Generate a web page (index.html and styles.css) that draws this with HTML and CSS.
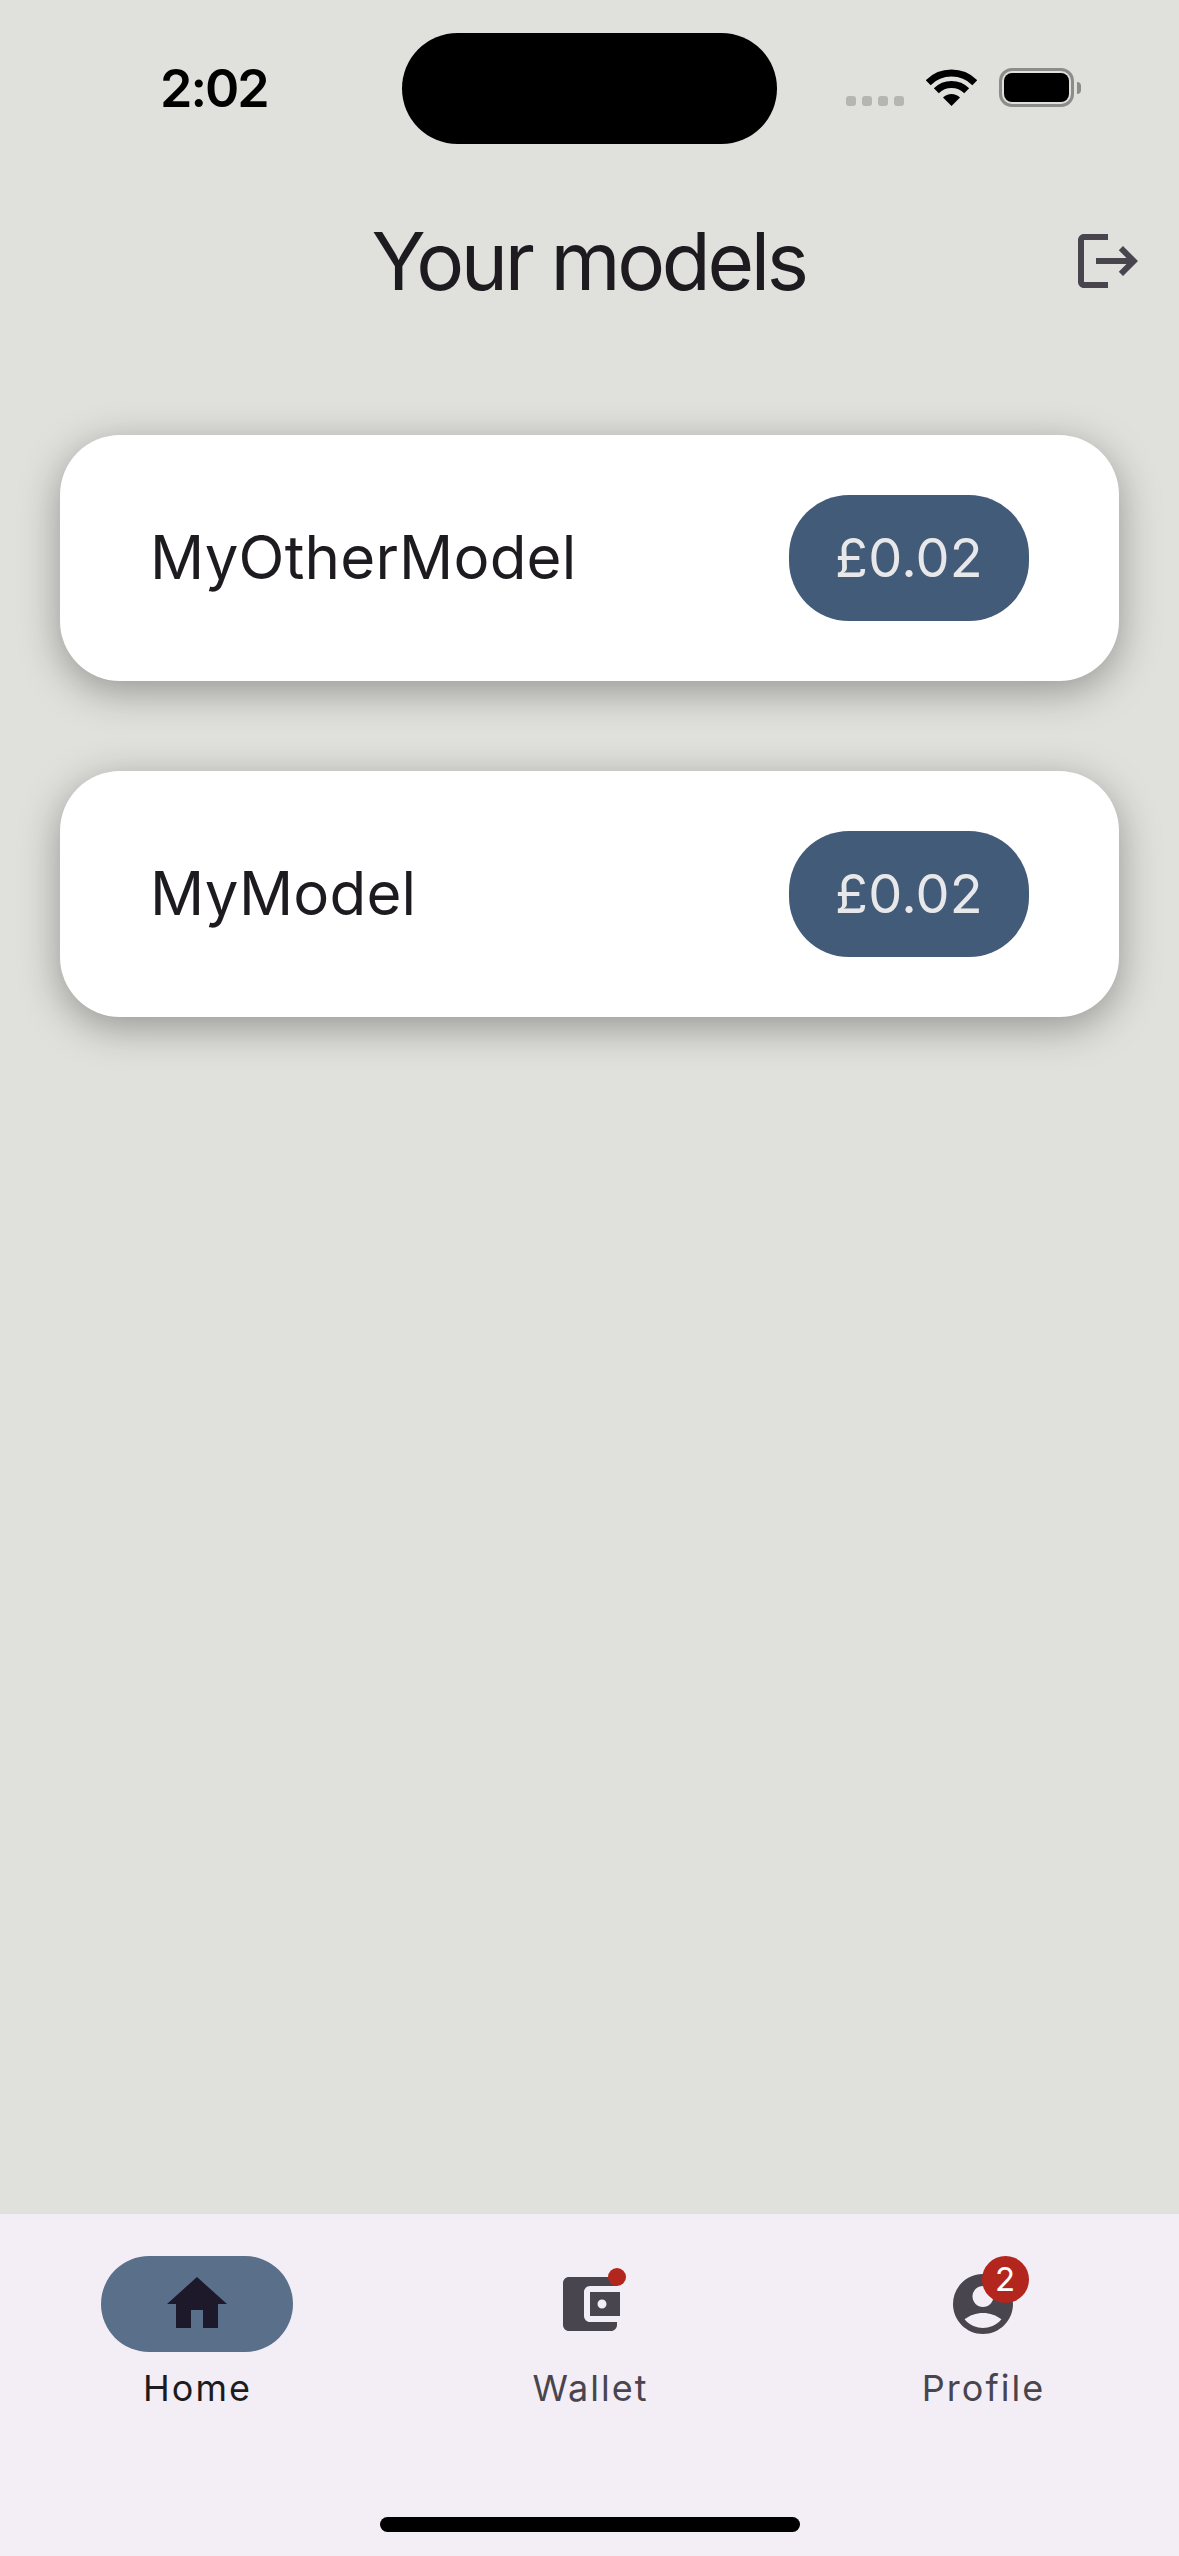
FILE: index.html
```html
<!doctype html>
<html lang="en-gb">
	<head>
		<meta charset="utf-8">
		<title>Your models</title>
		<link rel="stylesheet" href="styles.css">
	</head>
	<body>
		<div id="app">
			<div id="status">
				<span class="time">2:02</span>
				<div class="island"></div>
				<div class="status-icons">
					<div class="signal"><i></i><i></i><i></i><i></i></div>
					<svg class="wifi" viewBox="0 0 51 37">
						<path d="M17 28.5A12 12 0 0 1 34 28.5L25.5 37Z" fill="#000"/>
						<path d="M10.3 21.8A21.5 21.5 0 0 1 40.7 21.8" fill="none" stroke="#000" stroke-width="7"/>
						<path d="M2.2 13.7A33 33 0 0 1 48.8 13.7" fill="none" stroke="#000" stroke-width="7"/>
					</svg>
					<div class="battery"><div class="battery-level"></div></div>
					<div class="battery-cap"></div>
				</div>
			</div>

			<div id="head">
				<h1>Your models</h1>
				<svg class="icon logout" viewBox="0 0 24 24"><path d="M17 7l-1.41 1.41L18.17 11H8v2h10.17l-2.58 2.58L17 17l5-5zM4 5h8V3H4c-1.1 0-2 .9-2 2v14c0 1.1.9 2 2 2h8v-2H4V5z"/></svg>
			</div>

			<div id="models">
				<div class="card">
					<span class="name">MyOtherModel</span>
					<span class="price">£0.02</span>
				</div>
				<div class="card">
					<span class="name">MyModel</span>
					<span class="price">£0.02</span>
				</div>
			</div>

			<div id="nav">
				<div class="tab active">
					<div class="tab-icon">
						<svg class="icon" viewBox="0 0 24 24"><path d="M10 20v-6h4v6h5v-8h3L12 3 2 12h3v8z"/></svg>
					</div>
					<span class="label">Home</span>
				</div>
				<div class="tab">
					<div class="tab-icon">
						<svg class="icon" viewBox="0 0 24 24"><path d="M21 18v1c0 1.1-.9 2-2 2H5c-1.11 0-2-.9-2-2V5c0-1.1.89-2 2-2h14c1.1 0 2 .9 2 2v1h-9c-1.11 0-2 .9-2 2v8c0 1.1.89 2 2 2h9zm-9-2h10V8H12v8zm4-2.5c-.83 0-1.5-.67-1.5-1.5s.67-1.5 1.5-1.5 1.5.67 1.5 1.5-.67 1.5-1.5 1.5z"/></svg>
						<span class="dot"></span>
					</div>
					<span class="label">Wallet</span>
				</div>
				<div class="tab">
					<div class="tab-icon">
						<svg class="icon" viewBox="0 0 24 24"><path d="M12 2C6.48 2 2 6.48 2 12s4.48 10 10 10 10-4.48 10-10S17.52 2 12 2zm0 4c1.93 0 3.5 1.57 3.5 3.5S13.93 13 12 13s-3.5-1.57-3.5-3.5S10.07 6 12 6zm0 14c-2.03 0-4.43-.82-6.14-2.88C7.55 15.8 9.68 15 12 15s4.45.8 6.14 2.12C16.43 19.18 14.03 20 12 20z"/></svg>
						<span class="badge">2</span>
					</div>
					<span class="label">Profile</span>
				</div>
				<div class="home-bar"></div>
			</div>
		</div>
	</body>
</html>
```

FILE: styles.css
```css
html, body {
	margin: 0;
	background-color: #e0e1dc;
	font-family: "Inter", "Liberation Sans", sans-serif;
	color: #1d1b20;
}
#app {
	width: 1179px;
	height: 2556px;
	display: flex;
	flex-direction: column;
	overflow: hidden;
}

/* status bar */
#status {
	display: grid;
	grid-template-columns: 402px 375px 1fr;
	height: 111px;
	padding-top: 33px;
}
.time {
	padding: 26px 0 0 160px;
	font-size: 52px;
	font-weight: 600;
	line-height: 60px;
	letter-spacing: -2px;
	color: #000;
}
.island {
	background-color: #000;
	border-radius: 56px;
}
.status-icons {
	display: flex;
	align-items: flex-start;
	padding: 35px 0 0 69px;
}
.signal {
	display: flex;
	gap: 6px;
	margin-top: 28px;
}
.signal i {
	width: 10px;
	height: 10px;
	border-radius: 3px;
	background-color: #b5b6b2;
}
.wifi {
	width: 51px;
	height: 37px;
	margin: 1px 0 0 22px;
}
.battery {
	box-sizing: border-box;
	width: 75px;
	height: 39px;
	margin-left: 22px;
	padding: 2px;
	border: 3px solid #8c8c89;
	border-radius: 13px;
}
.battery-level {
	height: 100%;
	background-color: #000;
	border-radius: 8px;
}
.battery-cap {
	width: 4px;
	height: 12px;
	margin: 14px 0 0 3px;
	border-radius: 0 4px 4px 0;
	background-color: #8c8c89;
}

/* title row */
#head {
	display: grid;
	grid-template-columns: 1fr auto 1fr;
	align-items: center;
	height: 114px;
	margin-top: 60px;
}
h1 {
	grid-column: 2;
	margin: 0 0 0 -2px;
	font-size: 80px;
	font-weight: 400;
	line-height: 114px;
	letter-spacing: -3.4px;
	color: #1d1b20;
}
.icon {
	display: block;
	width: 72px;
	height: 72px;
	fill: #49454f;
}
.logout {
	justify-self: end;
	margin-right: 35px;
}

/* model cards */
#models {
	flex: 1;
	display: flex;
	flex-direction: column;
	gap: 90px;
	padding: 117px 60px 0 60px;
}
.card {
	display: flex;
	align-items: center;
	justify-content: space-between;
	height: 246px;
	padding: 0 90px;
	background-color: #fff;
	border-radius: 60px;
	box-shadow: 0 10px 40px rgba(0, 0, 0, 0.34);
}
.name {
	padding-bottom: 3px;
	font-size: 60px;
	letter-spacing: 0.2px;
	color: #1d1b20;
}
.price {
	width: 240px;
	height: 126px;
	border-radius: 60px;
	background-color: #425b78;
	color: #e8e8ea;
	font-size: 54px;
	letter-spacing: 0.2px;
	line-height: 126px;
	text-align: center;
}

/* bottom nav */
#nav {
	position: relative;
	display: grid;
	grid-template-columns: repeat(3, 393px);
	height: 342px;
	box-sizing: border-box;
	padding-top: 42px;
	background-color: #f3eef6;
}
.tab {
	display: flex;
	flex-direction: column;
	align-items: center;
	color: #49454f;
}
.tab-icon {
	position: relative;
	display: flex;
	justify-content: center;
	align-items: center;
	width: 192px;
	height: 96px;
	border-radius: 48px;
}
.active .tab-icon {
	background-color: #5a6f8a;
}
.active .icon {
	fill: #1d192b;
}
.label {
	margin-top: 9px;
	padding-left: 2px;
	font-size: 36px;
	line-height: 54px;
	letter-spacing: 2px;
}
.active .label {
	color: #1d1b20;
}
.dot {
	position: absolute;
	top: 12px;
	left: 114px;
	width: 18px;
	height: 18px;
	border-radius: 50%;
	background-color: #b3261e;
}
.badge {
	position: absolute;
	top: 0;
	left: 95px;
	width: 47px;
	height: 47px;
	border-radius: 50%;
	background-color: #b3261e;
	color: #fff;
	font-size: 33px;
	line-height: 47px;
	text-align: center;
}
.home-bar {
	position: absolute;
	left: 380px;
	bottom: 24px;
	width: 420px;
	height: 15px;
	border-radius: 8px;
	background-color: #000;
}
```
